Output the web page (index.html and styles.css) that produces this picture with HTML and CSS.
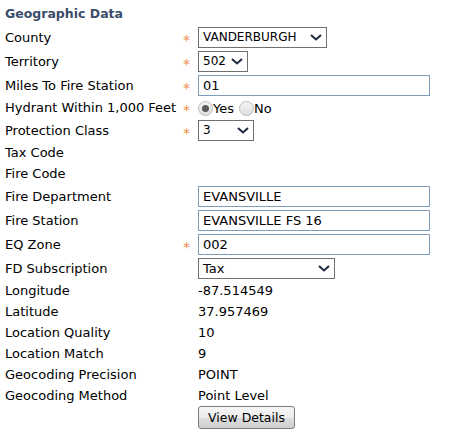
FILE: index.html
```html
<!DOCTYPE html>
<html>
<head>
<meta charset="utf-8">
<link rel="stylesheet" href="styles.css">
</head>
<body>
<div class="panel">
  <div class="heading">Geographic Data</div>
  <div class="form">
    <div class="label">County</div><div class="req">*</div>
    <div class="field"><div class="select small w-county">VANDERBURGH<svg class="chev" viewBox="0 0 12 7"><path d="M1 1 L6 5.5 L11 1"/></svg></div></div>

    <div class="label">Territory</div><div class="req">*</div>
    <div class="field"><div class="select small w-terr">502<svg class="chev" viewBox="0 0 12 7"><path d="M1 1 L6 5.5 L11 1"/></svg></div></div>

    <div class="label">Miles To Fire Station</div><div class="req">*</div>
    <div class="field"><div class="input">01</div></div>

    <div class="label text">Hydrant Within 1,000 Feet</div><div class="req">*</div>
    <div class="field radios"><span class="radio checked"></span><span class="rlabel">Yes</span><span class="radio"></span><span class="rlabel">No</span></div>

    <div class="label">Protection Class</div><div class="req">*</div>
    <div class="field"><div class="select small w-prot">3<svg class="chev" viewBox="0 0 12 7"><path d="M1 1 L6 5.5 L11 1"/></svg></div></div>

    <div class="label text">Tax Code</div><div></div><div class="field value"></div>
    <div class="label text">Fire Code</div><div></div><div class="field value"></div>

    <div class="label">Fire Department</div><div></div>
    <div class="field"><div class="input">EVANSVILLE</div></div>

    <div class="label">Fire Station</div><div></div>
    <div class="field"><div class="input">EVANSVILLE FS 16</div></div>

    <div class="label">EQ Zone</div><div class="req">*</div>
    <div class="field"><div class="input">002</div></div>

    <div class="label">FD Subscription</div><div></div>
    <div class="field"><div class="select w-fd">Tax<svg class="chev" viewBox="0 0 12 7"><path d="M1 1 L6 5.5 L11 1"/></svg></div></div>

    <div class="label text">Longitude</div><div></div><div class="field value">-87.514549</div>
    <div class="label text">Latitude</div><div></div><div class="field value">37.957469</div>
    <div class="label text">Location Quality</div><div></div><div class="field value">10</div>
    <div class="label text">Location Match</div><div></div><div class="field value">9</div>
    <div class="label text">Geocoding Precision</div><div></div><div class="field value">POINT</div>
    <div class="label text">Geocoding Method</div><div></div><div class="field value">Point Level</div>
    <div></div><div></div><div class="field btn-row"><button class="btn">View Details</button></div>
  </div>
</div>
</body>
</html>
```
FILE: styles.css
```css
html, body {
  margin: 0;
  padding: 0;
  background: #ffffff;
}
body {
  font-family: "DejaVu Sans", Verdana, sans-serif;
  font-size: 13px;
  color: #000000;
}
.panel {
  padding: 6px 5px 0 5px;
}
.heading {
  font-weight: bold;
  color: #3b4d6b;
  font-size: 12.5px;
  line-height: 16px;
  margin-bottom: 5px;
}
.form {
  display: grid;
  grid-template-columns: 178px 15px 232px;
  row-gap: 3px;
  align-items: center;
}
.label {
  line-height: 16px;
  white-space: nowrap;
}
.text {
  height: 18px;
  line-height: 18px;
}
.req {
  color: #f08a45;
  font-size: 14px;
  line-height: 14px;
  padding-top: 4px;
}
.field {
  display: flex;
  align-items: center;
}
.value {
  height: 18px;
  line-height: 18px;
}
.select {
  position: relative;
  box-sizing: border-box;
  height: 21px;
  border: 1px solid #707070;
  padding: 0 4px;
  line-height: 19px;
  background: #fff;
}
.select.small {
  font-size: 12px;
}
.chev {
  position: absolute;
  right: 4px;
  top: 6px;
  width: 12px;
  height: 7px;
  fill: none;
  stroke: #1b2840;
  stroke-width: 2;
}
.w-county { width: 129px; }
.w-terr { width: 50px; }
.w-prot { width: 56px; }
.w-fd { width: 137px; }
.input {
  box-sizing: border-box;
  width: 232px;
  height: 21px;
  border: 1px solid #7f9db9;
  padding: 0 4px;
  line-height: 19px;
}
.radios {
  height: 18px;
}
.radio {
  box-sizing: border-box;
  width: 15px;
  height: 15px;
  border-radius: 50%;
  border: 1px solid #bdbdbd;
  background: linear-gradient(#f4f4f4, #dedede);
  display: inline-flex;
  align-items: center;
  justify-content: center;
}
.radio.checked::after {
  content: "";
  width: 7px;
  height: 7px;
  border-radius: 50%;
  background: #5a5a5a;
}
.rlabel {
  margin: 0 5px 0 0;
}
.btn-row {
  margin-top: -2px;
}
.btn {
  font-family: "DejaVu Sans", Verdana, sans-serif;
  font-size: 12.5px;
  color: #000;
  height: 23px;
  width: 97px;
  padding: 0;
  border: 1px solid #7a7a7a;
  border-radius: 3px;
  background: linear-gradient(#f6f6f6 0%, #ebebeb 50%, #dddddd 51%, #cfcfcf 100%);
}
```
